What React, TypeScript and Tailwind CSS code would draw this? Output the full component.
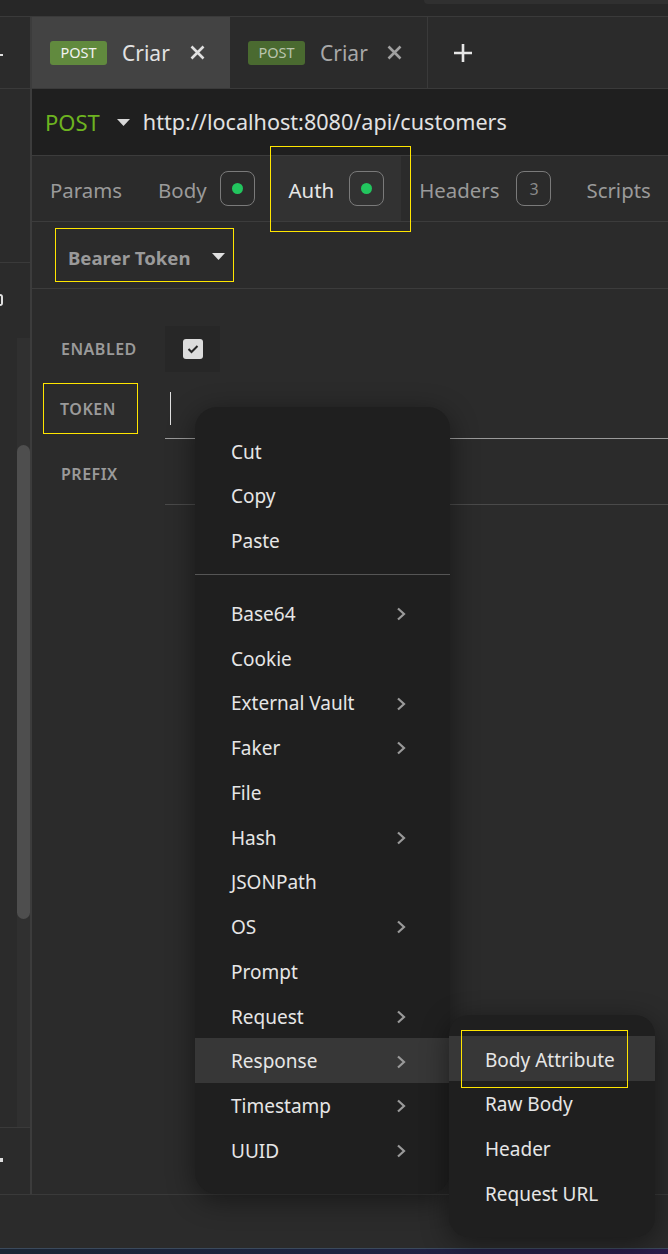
import React from "react";

const MAIN_ITEMS: { label: string; sub: boolean }[] = [
  { label: "Base64", sub: true },
  { label: "Cookie", sub: false },
  { label: "External Vault", sub: true },
  { label: "Faker", sub: true },
  { label: "File", sub: false },
  { label: "Hash", sub: true },
  { label: "JSONPath", sub: false },
  { label: "OS", sub: true },
  { label: "Prompt", sub: false },
  { label: "Request", sub: true },
  { label: "Response", sub: true },
  { label: "Timestamp", sub: true },
  { label: "UUID", sub: true },
];

const SUB_ITEMS = ["Body Attribute", "Raw Body", "Header", "Request URL"];

function Chevron() {
  return (
    <svg width="10" height="14" viewBox="0 0 10 14" className="text-[#9a9a9a]">
      <path d="M2 1.5 L8 7 L2 12.5" fill="none" stroke="currentColor" strokeWidth="2.2" />
    </svg>
  );
}

function Caret({ color = "#d8d8d8" }: { color?: string }) {
  return (
    <svg width="13" height="7" viewBox="0 0 13 7">
      <path d="M0 0 H13 L6.5 7 Z" fill={color} />
    </svg>
  );
}

function CloseX({ color }: { color: string }) {
  return (
    <svg width="15" height="15" viewBox="0 0 15 15">
      <path d="M1.5 1.5 L13.5 13.5 M13.5 1.5 L1.5 13.5" stroke={color} strokeWidth="2.6" />
    </svg>
  );
}

function Dot() {
  return (
    <span className="w-[35px] h-[35px] rounded-[8px] border border-[#7a7a7a] flex items-center justify-center">
      <span className="w-[11px] h-[11px] rounded-full bg-[#22c55e]" />
    </span>
  );
}

function MenuItem({ label, sub, active, pr = "pr-[44px]" }: { label: string; sub?: boolean; active?: boolean; pr?: string }) {
  return (
    <div
      className={`h-[44.75px] flex items-center justify-between pt-[3px] pl-[36px] ${pr} text-[19px] text-[#e6e6e6] whitespace-nowrap ${
        active ? "bg-[#373737]" : ""
      }`}
    >
      <span>{label}</span>
      {sub && <Chevron />}
    </div>
  );
}

export default function App() {
  return (
    <div className="relative w-[668px] h-[1254px] overflow-hidden bg-[#2b2b2b] flex flex-col font-['Noto_Sans',sans-serif]">
      {/* window top strip */}
      <div className="h-[17px] bg-[#272727] border-b border-[#3a3a3a] flex justify-end">
        <div className="w-[244px] h-[4px] bg-[#303030] rounded-bl-[6px]" />
      </div>

      <div className="flex-1 flex min-h-0">
        {/* sidebar */}
        <div className="w-[32px] border-r-2 border-[#3c3c3c] flex flex-col">
          <div className="h-[72px] border-b border-[#3a3a3a] flex items-center">
            <span className="w-[3px] h-[2px] bg-[#dddddd] mt-[4px]" />
          </div>
          <div className="h-[174px] border-b border-[#3a3a3a]" />
          <div className="flex-1 border-b border-[#3a3a3a] flex flex-col pt-[31px]">
            <span className="w-[3px] h-[12px] rounded-r-full border-2 border-l-0 border-[#e0e0e0]" />
            <div className="mt-[32px] ml-[17px] w-[13px] flex-1 bg-[#303030] pt-[107px] pb-[208px] flex">
              <div className="flex-1 rounded-full bg-[#4e4e4e]" />
            </div>
          </div>
          <div className="h-[66px] flex items-center">
            <span className="w-[3px] h-[4px] bg-[#dddddd] mt-[-2px]" />
          </div>
        </div>

        {/* main */}
        <div className="flex-1 flex flex-col min-w-0">
          {/* request tabs */}
          <div className="h-[72px] border-b border-[#3a3a3a] flex">
            <div className="w-[198px] bg-[#434343] flex items-center pl-[18px] pr-[25px]">
              <span className="w-[57px] h-[24px] rounded-[3px] bg-[#618a3e] text-[14.5px] text-[#f2f2f2] flex items-center justify-center pt-[1px]">
                POST
              </span>
              <span className="ml-[15px] text-[21px] text-[#e2e2e2] pt-[3px]">Criar</span>
              <span className="ml-auto flex">
                <CloseX color="#e0e0e0" />
              </span>
            </div>
            <div className="w-[198px] border-r border-[#3a3a3a] flex items-center pl-[18px] pr-[25px]">
              <span className="w-[57px] h-[24px] rounded-[3px] bg-[#4a6a30] text-[14.5px] text-[#b9c4ad] flex items-center justify-center pt-[1px]">
                POST
              </span>
              <span className="ml-[15px] text-[21px] text-[#a8a8a8] pt-[3px]">Criar</span>
              <span className="ml-auto flex">
                <CloseX color="#a0a0a0" />
              </span>
            </div>
            <div className="flex items-center pl-[26px]">
              <svg width="18" height="18" viewBox="0 0 18 18">
                <path d="M9 0 V18 M0 9 H18" stroke="#e6e6e6" strokeWidth="2.6" />
              </svg>
            </div>
          </div>

          {/* url bar */}
          <div className="h-[67px] bg-[#1f1f1f] border-b border-[#3c3c3c] flex items-center pl-[13px]">
            <span className="text-[22px] text-[#6db320] pt-[1px]">POST</span>
            <span className="ml-[17px] flex">
              <Caret />
            </span>
            <span className="ml-[13px] text-[21.6px] text-[#e2e2e2] pt-[1px]">http://localhost:8080/api/customers</span>
          </div>

          {/* section tabs */}
          <div className="h-[66px] border-b border-[#3c3c3c] flex items-stretch text-[20.4px] text-[#9a9a9a]">
            <div className="flex items-center pl-[18px] pr-[18px]">
              <span className="pt-[3px]">Params</span>
            </div>
            <div className="flex items-center gap-[13px] pl-[18px] pr-[15px]">
              <span className="pt-[3px]">Body</span>
              <Dot />
            </div>
            <div className="flex items-center gap-[15px] pl-[19px] pr-[17px] bg-[#323232] text-[#e6e6e6]">
              <span className="pt-[3px]">Auth</span>
              <Dot />
            </div>
            <div className="flex items-center gap-[17px] pl-[18px] pr-[18px]">
              <span className="pt-[3px]">Headers</span>
              <span className="w-[35px] h-[35px] rounded-[8px] border border-[#7a7a7a] flex items-center justify-center text-[16px] text-[#8a8a8a]">
                3
              </span>
            </div>
            <div className="flex items-center pl-[17px]">
              <span className="pt-[3px]">Scripts</span>
            </div>
          </div>

          {/* auth type */}
          <div className="h-[67px] border-b border-[#3c3c3c] flex items-center pl-[36px]">
            <span className="text-[18.6px] font-bold text-[#9a9a9a] pt-[5px]">Bearer Token</span>
            <span className="ml-[21px] flex pt-[2px]">
              <Caret color="#e0e0e0" />
            </span>
          </div>

          {/* form */}
          <div className="flex-1 pt-[37px] flex flex-col">
            <div className="flex h-[46px]">
              <div className="w-[133px] pl-[29px] flex items-center text-[16px] font-semibold tracking-[0.5px] text-[#9a9a9a]">
                ENABLED
              </div>
              <div className="w-[55px] bg-[#272727] flex items-center justify-center">
                <span className="w-[20px] h-[20px] rounded-[3px] bg-[#dcdcdc] flex items-center justify-center">
                  <svg width="12" height="10" viewBox="0 0 12 10">
                    <path d="M1.5 5 L4.5 8 L10.5 2" fill="none" stroke="#252525" strokeWidth="2" />
                  </svg>
                </span>
              </div>
            </div>
            <div className="mt-[4px] flex h-[63px]">
              <div className="w-[133px] pl-[28px] flex items-center text-[16px] font-semibold tracking-[0.5px] text-[#9a9a9a] pt-[2px]">
                TOKEN
              </div>
              <div className="flex-1 border-b border-[#9a9a9a] flex items-center pl-[5px]">
                <span className="w-[1px] h-[33px] bg-[#e0e0e0] mt-[2px]" />
              </div>
            </div>
            <div className="flex h-[66px]">
              <div className="w-[133px] pl-[29px] flex items-center text-[16px] font-semibold tracking-[0.5px] text-[#9a9a9a] pt-[4px]">
                PREFIX
              </div>
              <div className="flex-1 border-b border-[#4a4a4a]" />
            </div>
          </div>
        </div>
      </div>

      {/* footer */}
      <div className="h-[54px] border-t border-[#3a3a3a] bg-[#2b2b2b]" />
      <div className="h-[6px] border-t border-[#3b4a5c] bg-gradient-to-r from-[#1b2534] via-[#1c2340] to-[#2b1c4a]" />

      {/* context menu */}
      <div className="absolute left-[195px] top-[407px] w-[255px] h-[787px] rounded-[22px] bg-[#1f1f1f] shadow-[0_6px_28px_rgba(0,0,0,0.45)] pt-[21px] flex flex-col">
        <MenuItem label="Cut" />
        <MenuItem label="Copy" />
        <MenuItem label="Paste" />
        <div className="mt-[12px] mb-[15px] h-px bg-[#555555]" />
        {MAIN_ITEMS.map((it) => (
          <MenuItem key={it.label} label={it.label} sub={it.sub} active={it.label === "Response"} />
        ))}
      </div>

      {/* submenu */}
      <div className="absolute left-[449px] top-[1015px] w-[206px] h-[222px] rounded-[20px] bg-[#1f1f1f] shadow-[0_6px_28px_rgba(0,0,0,0.45)] pt-[21px] flex flex-col">
        {SUB_ITEMS.map((s, i) => (
          <MenuItem key={s} label={s} active={i === 0} pr="pr-[10px]" />
        ))}
      </div>

      {/* highlight annotations */}
      <div className="absolute left-[270px] top-[146px] w-[141px] h-[86px] border border-[#ffe600]" />
      <div className="absolute left-[55px] top-[228px] w-[179px] h-[54px] border border-[#ffe600]" />
      <div className="absolute left-[43px] top-[383px] w-[95px] h-[51px] border border-[#ffe600]" />
      <div className="absolute left-[461px] top-[1030px] w-[167px] h-[58px] border border-[#ffe600]" />
    </div>
  );
}
